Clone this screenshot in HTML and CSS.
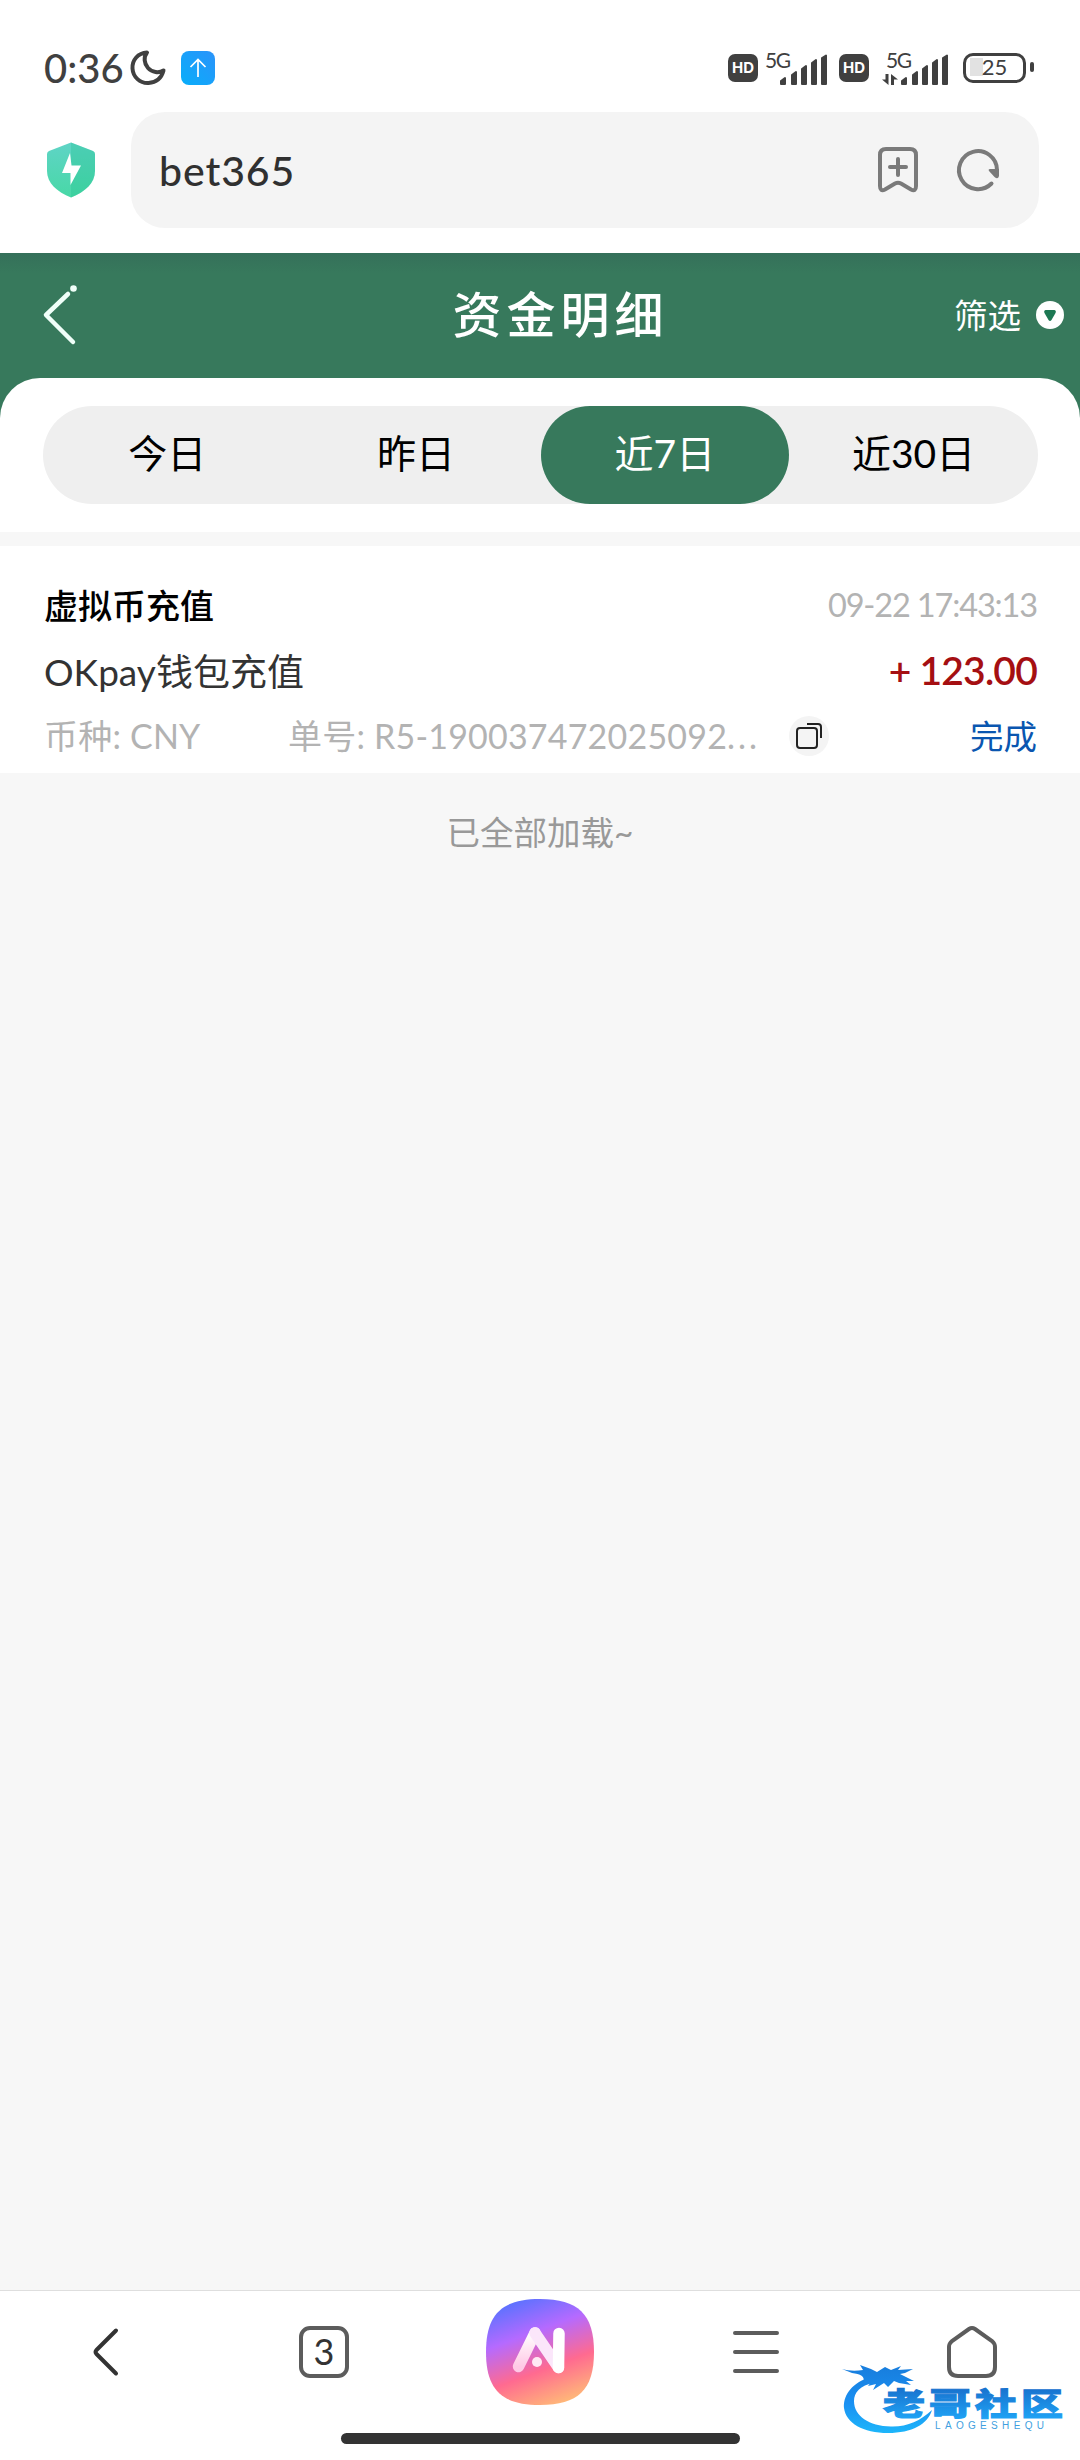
FILE: index.html
```html
<!DOCTYPE html>
<html lang="zh-CN">
<head>
    <meta charset="UTF-8">
    <meta name="viewport" content="width=device-width, initial-scale=1.0">
    <title>资金明细</title>
    <link rel="stylesheet" href="styles.css">
</head>
<body>
    <div class="status-bar">
        <span class="clock">0:36</span>
        <svg class="moon" width="36" height="36" viewBox="0 0 36 36">
            <path d="M17 2.500C8 3 2 10 2.500 18.500C3 27 10 33.500 18.500 33C26 32.500 31.500 28 33.500 20.500C29 23.500 22 22.500 18 18C14 13.500 13.500 7 17 2.500Z" fill="none" stroke="#404040" stroke-width="4" stroke-linejoin="round"/>
        </svg>
        <svg class="app-icon" width="34" height="34" viewBox="0 0 34 34">
            <defs>
                <linearGradient id="appBg" x1="1" y1="0" x2="0" y2="1">
                    <stop offset="0" stop-color="#2b93fa"/>
                    <stop offset="1" stop-color="#08aefa"/>
                </linearGradient>
            </defs>
            <rect width="34" height="34" rx="8" fill="url(#appBg)"/>
            <path d="M17 26V9M9.500 16L17 8.500L24.500 16" fill="none" stroke="#fff" stroke-width="1.700"/>
        </svg>

        <div class="status-right">
            <span class="hd">HD</span>
            <svg class="signal" width="64" height="36" viewBox="0 0 64 36">
                <text class="net" x="0" y="18" textLength="26">5G</text>
                <g class="bars">
                    <path d="M16 34V31L20 28V34Z"/>
                    <path d="M27 34V25L31 22V34Z"/>
                    <path d="M37 34V19L41 16V34Z"/>
                    <path d="M47 34V13L51 10V34Z"/>
                    <path d="M57 34V8L61 5.500V34Z"/>
                </g>
            </svg>
            <span class="hd">HD</span>
            <svg class="signal second" width="68" height="36" viewBox="0 0 68 36">
                <text class="net" x="4" y="18" textLength="26">5G</text>
                <path d="M3.500 24H6.500V35L0 29.500H3.500ZM9 35V24L16 29.500H12V35Z" fill="#404040"/>
                <g class="bars">
                    <path d="M20 34V31L24 28V34Z"/>
                    <path d="M31 34V25L35 22V34Z"/>
                    <path d="M41 34V19L45 16V34Z"/>
                    <path d="M51 34V13L55 10V34Z"/>
                    <path d="M61 34V8L65 5.500V34Z"/>
                </g>
            </svg>
            <div class="battery">25</div>
        </div>
    </div>

    <div class="address-bar">
        <svg class="shield" width="48" height="56" viewBox="0 0 48 56">
            <defs>
                <linearGradient id="shieldBg" x1="0" y1="0" x2="0" y2="1">
                    <stop offset="0" stop-color="#5fd4c6"/>
                    <stop offset="1" stop-color="#48d8a6"/>
                </linearGradient>
            </defs>
            <path d="M24 0.500L46 9Q48 10 48 12V29C48 41 38 50 24 55.500C10 50 0 41 0 29V12Q0 10 2 9Z" fill="url(#shieldBg)"/>
            <path d="M24 0.500L46 9Q48 10 48 12V29C48 41 38 50 24 55.500Z" fill="#20c08d" opacity=".3"/>
            <path d="M23 11L15 31H23.500V43L34 23.500H24.500Z" fill="#fff"/>
        </svg>
        <div class="search-box">
            <span class="site">bet365</span>
            <svg width="42" height="48" viewBox="0 0 42 48">
                <path d="M9 3H33Q39 3 39 9V40Q39 46 34 43.500L24 37.500Q21 36 18 37.500L8 43.500Q3 46 3 40V9Q3 3 9 3ZM21 13V29M13 21H29" fill="none" stroke="#7a7a7a" stroke-width="4" stroke-linecap="round"/>
            </svg>
            <svg width="44" height="44" viewBox="0 0 44 44">
                <path d="M35.500 35.500A19 19 0 1 1 41 22" fill="none" stroke="#7a7a7a" stroke-width="4" stroke-linecap="round"/>
                <path d="M34 21H43V28Q42 32 38.500 29L33 23Q32 21 34 21Z" fill="#7a7a7a"/>
            </svg>
        </div>
    </div>

    <div class="header">
        <svg class="back" width="36" height="64" viewBox="0 0 36 64">
            <path d="M26 11L4 32L31 59" fill="none" stroke="#f0fff9" stroke-width="4.500" stroke-linecap="round" stroke-linejoin="round"/>
            <circle cx="31.500" cy="5.500" r="3.300" fill="#f0fff9"/>
        </svg>
        <h1>资金明细</h1>
        <div class="filter">
            <span>筛选</span>
            <svg width="28" height="28" viewBox="0 0 28 28">
                <circle cx="14" cy="14" r="14" fill="#fff"/>
                <path d="M9.500 9H18.500Q20.500 9.500 19.500 12L15.500 19Q14 21 12.500 19L8.500 12Q7.500 9.500 9.500 9Z" fill="#1d7853"/>
            </svg>
        </div>
    </div>

    <div class="tabs-panel">
        <div class="tabs">
            <div class="tab">今日</div>
            <div class="tab">昨日</div>
            <div class="tab active">近7日</div>
            <div class="tab">近30日</div>
        </div>
    </div>

    <div class="record">
        <div class="row">
            <span class="type">虚拟币充值</span>
            <span class="date">09-22 17:43:13</span>
        </div>
        <div class="row">
            <span class="name">OKpay钱包充值</span>
            <span class="amount">+ 123.00</span>
        </div>
        <div class="row">
            <span class="currency">币种: CNY</span>
            <span class="order">单号: R5-190037472025092<span class="dots">...</span></span>
            <span class="copy">
                <svg width="28" height="28" viewBox="0 0 28 28">
                    <rect x="2" y="6" width="20" height="20" rx="3" fill="none" stroke="#222" stroke-width="2"/>
                    <path d="M12 2H23Q26 2 26 5V16" fill="none" stroke="#222" stroke-width="2"/>
                </svg>
            </span>
            <span class="state">完成</span>
        </div>
    </div>

    <div class="list-end">已全部加载~</div>

    <div class="bottom-bar">
        <div class="nav">
            <div class="nav-item">
                <svg class="nav-back" width="30" height="52" viewBox="0 0 30 52">
                    <path d="M25 4.500L5.500 24Q3.500 26 5.500 28L25 47.500" fill="none" stroke="#333" stroke-width="4" stroke-linecap="round"/>
                </svg>
            </div>
            <div class="nav-item"><span class="pages">3</span></div>
            <div class="nav-item">
                <svg width="108" height="106" viewBox="0 0 108 106">
                    <defs>
                        <linearGradient id="aiBg" x1=".3" y1="0" x2=".68" y2="1">
                            <stop offset="0" stop-color="#5a72ff"/>
                            <stop offset=".32" stop-color="#b56aff"/>
                            <stop offset=".66" stop-color="#ff6a90"/>
                            <stop offset="1" stop-color="#ffb978"/>
                        </linearGradient>
                        <linearGradient id="aiLeg" x1="0" y1="0" x2="0" y2="1">
                            <stop offset="0" stop-color="#fff"/>
                            <stop offset="1" stop-color="#ffc9e6"/>
                        </linearGradient>
                    </defs>
                    <path d="M54 0C92 0 108 15 108 53S92 106 54 106S0 91 0 53S16 0 54 0Z" fill="url(#aiBg)"/>
                    <path d="M32.500 67.500L49 34" fill="none" stroke="url(#aiLeg)" stroke-width="11.500" stroke-linecap="round"/>
                    <path d="M49 34L72.500 68.500" fill="none" stroke="#fbe6fa" stroke-width="11.500" stroke-linecap="round"/>
                    <path d="M73 34.500L72.500 68.500" fill="none" stroke="#fff" stroke-width="11.500" stroke-linecap="round"/>
                    <circle cx="51" cy="63" r="5" fill="#ffe9f4"/>
                </svg>
            </div>
            <div class="nav-item">
                <svg width="46" height="42" viewBox="0 0 46 42">
                    <path d="M2 2H44M2 21H44M2 40H44" stroke="#5c5c5c" stroke-width="4" stroke-linecap="round"/>
                </svg>
            </div>
            <div class="nav-item">
                <svg width="50" height="52" viewBox="0 0 50 52">
                    <path d="M22 3Q25 1 28 3L45 15Q48 17.500 48 21V41Q48 50 39 50H11Q2 50 2 41V21Q2 17.500 5 15Z" fill="none" stroke="#5c5c5c" stroke-width="4"/>
                </svg>
            </div>
        </div>
        <div class="home-indicator"></div>

        <svg class="watermark" width="226" height="74" viewBox="0 0 226 74">
            <defs>
                <linearGradient id="wm" gradientUnits="userSpaceOnUse" x1="0" y1="5" x2="0" y2="70">
                    <stop offset="0" stop-color="#187fdf"/>
                    <stop offset=".5" stop-color="#1a90f2"/>
                    <stop offset="1" stop-color="#1db8fb"/>
                </linearGradient>
                <linearGradient id="wmText" x1="0" y1="0" x2="0" y2="1">
                    <stop offset=".2" stop-color="#1872ce"/>
                    <stop offset=".9" stop-color="#1fa4f6"/>
                </linearGradient>
            </defs>
            <g fill="url(#wm)">
                <path d="M26 13C8 19 1 32 2 43C4 58 21 68 46 68C70 68 86 59 90 45C78 56 65 62 49 61.500C27 61 12 51 12 36C12 28 18 20 32 18Z"/>
                <path d="M0 4C7 6 14 6 21 5L18 0L29 4L35 7L43 2L49 5L59 1L56 5L71 4L63 8L58 9L72 16L64 16L69 20L57 18L52 16L46 22L42 18L31 25L34 19L26 21L29 17L21 18C24 11 18 9 10 8Z"/>
            </g>
            <text class="wm-name" transform="translate(41 50) scale(1 .73)" textLength="180" fill="url(#wmText)" stroke="url(#wmText)">老哥社区</text>
            <text class="wm-latin" x="93" y="64" textLength="109">LAOGESHEQU</text>
        </svg>
    </div>
</body>
</html>
```

FILE: styles.css
```css
* {
    box-sizing: border-box;
}

body {
    margin: 0;
    width: 1080px;
    height: 2460px;
    display: flex;
    flex-direction: column;
    overflow: hidden;
    font-family: Lato, "Noto Sans CJK SC", sans-serif;
    background-color: #f7f7f7;
    color: #000;
}

svg {
    display: block;
    flex: none;
    overflow: visible;
}

/* phone status bar */
.status-bar {
    height: 112px;
    padding: 24px 47px 0 44px;
    display: flex;
    align-items: center;
    background-color: #fff;
    color: #404040;
}

.clock {
    width: 86px;
    font-size: 40px;
    font-weight: 500;
    white-space: nowrap;
}

.app-icon {
    margin-left: 15px;
}

.status-right {
    margin-left: auto;
    display: flex;
    align-items: center;
}

.hd {
    width: 30px;
    height: 28px;
    border-radius: 7px;
    background-color: #404040;
    color: #fff;
    font-family: Inter, sans-serif;
    font-size: 15px;
    font-weight: 700;
    line-height: 28px;
    text-align: center;
}

.signal {
    margin: 0 10px 0 7px;
}

.signal.second {
    margin: 0 12px 0 13px;
}

.net {
    font-size: 21px;
    fill: #404040;
}

.bars {
    fill: #404040;
    stroke: #404040;
    stroke-width: 2px;
    stroke-linejoin: round;
}

.battery {
    position: relative;
    width: 63px;
    height: 30px;
    margin: 0 7px 0 1px;
    border: 3.5px solid #404040;
    border-radius: 10px;
    font-size: 22px;
    line-height: 22px;
    text-align: center;
    background: linear-gradient(#e2e2e2, #e2e2e2) 4px 2px / 13px 18px no-repeat;
}

.battery::after {
    content: "";
    position: absolute;
    right: -11px;
    top: 6px;
    width: 4px;
    height: 10px;
    border-radius: 2px;
    background-color: #404040;
}

/* browser address bar */
.address-bar {
    height: 141px;
    padding: 0 41px 25px 47px;
    display: flex;
    align-items: center;
    gap: 36px;
    background-color: #fff;
}

.search-box {
    flex: 1;
    height: 116px;
    padding: 0 39px 0 28px;
    display: flex;
    align-items: center;
    border-radius: 34px;
    background-color: #f4f4f4;
}

.site {
    flex: 1;
    font-size: 41px;
    font-weight: 500;
    letter-spacing: 0.9px;
    color: #303030;
}

.search-box svg + svg {
    margin-left: 37px;
}

/* page header */
.header {
    height: 165px;
    padding: 0 16px 41px 42px;
    display: grid;
    grid-template-columns: 1fr auto 1fr;
    align-items: center;
    background: linear-gradient(#35705a, #37795c 20px);
    color: #fff;
}

.header h1 {
    margin: 0 0 3px 15px;
    font-size: 49px;
    font-weight: 500;
    letter-spacing: 5px;
    line-height: 60px;
}

.filter {
    justify-self: end;
    display: flex;
    align-items: center;
    gap: 15px;
    font-size: 33.5px;
}

.filter span {
    margin-bottom: 3px;
}

.tabs-panel {
    height: 154px;
    margin-top: -40px;
    padding: 28px 42px 28px 43px;
    border-radius: 40px 40px 0 0;
    background-color: #fff;
}

.tabs {
    height: 98px;
    display: flex;
    border-radius: 49px;
    background-color: #efefef;
}

.tab {
    flex: 1;
    border-radius: 49px;
    font-size: 39px;
    line-height: 95px;
    text-align: center;
}

.tab.active {
    background-color: #37795c;
    color: #fff;
}

/* record list */
.record {
    height: 227px;
    margin-top: 14px;
    padding: 26px 43px 6px 44px;
    background-color: #fff;
}

.row {
    height: 65px;
    display: flex;
    align-items: center;
    justify-content: space-between;
    white-space: nowrap;
}

.type {
    font-size: 34px;
    font-weight: 500;
}

.date {
    font-size: 32.5px;
    letter-spacing: -1.15px;
    color: #b3b3b3;
}

.name {
    font-size: 37px;
    color: #333;
}

.amount {
    font-size: 39px;
    font-weight: 600;
    letter-spacing: -0.8px;
    color: #a50f12;
}

.currency,
.order {
    font-size: 34px;
    letter-spacing: 0.2px;
    color: #b3b3b3;
}

.currency {
    width: 244px;
}

.dots {
    letter-spacing: 3px;
}

.copy {
    width: 40px;
    height: 40px;
    margin: 2px auto 0 29px;
    display: flex;
    align-items: center;
    justify-content: center;
    border-radius: 50%;
    background-color: #f4f4f4;
}

.state {
    font-size: 33.5px;
    color: #0a56b0;
}

.list-end {
    flex: 1;
    padding-top: 34px;
    font-size: 33.5px;
    line-height: 50px;
    text-align: center;
    color: #999;
}

/* browser toolbar */
.bottom-bar {
    position: relative;
    height: 170px;
    border-top: 1px solid #dedede;
    background-color: #fff;
}

.nav {
    height: 122px;
    display: flex;
}

.nav-item {
    flex: 1;
    display: flex;
    align-items: center;
    justify-content: center;
}

.nav-back {
    margin-right: 4px;
}

.pages {
    width: 50px;
    height: 52px;
    border: 4px solid #5c5c5c;
    border-radius: 11px;
    font-size: 36px;
    line-height: 43px;
    text-align: center;
    color: #333;
}

.home-indicator {
    width: 399px;
    height: 11px;
    margin: 20px auto 0;
    border-radius: 6px;
    background-color: #333;
}

.watermark {
    position: absolute;
    left: 842px;
    top: 74px;
}

.wm-name {
    font-family: "Noto Sans CJK SC", sans-serif;
    font-size: 42px;
    font-weight: 900;
    stroke-width: 1.5px;
}

.wm-latin {
    font-family: "Liberation Sans", sans-serif;
    font-size: 10px;
    fill: #3f9fe0;
}
```
